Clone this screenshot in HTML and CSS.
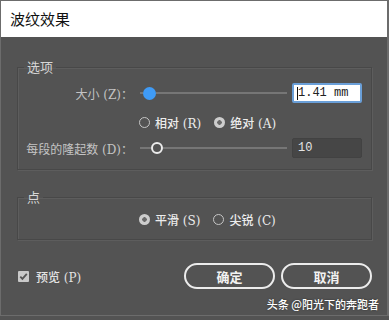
FILE: index.html
```html
<!DOCTYPE html>
<html lang="zh-CN">
<head>
    <meta charset="UTF-8">
    <title>波纹效果</title>
    <link rel="stylesheet" href="styles.css">
</head>
<body>
    <div class="dialog">
        <div class="titlebar">波纹效果</div>
        <div class="content">
            <fieldset class="group group-options">
                <legend>选项</legend>
                <div class="row row-size">
                    <span class="label">大小 (Z)：</span>
                    <div class="slider">
                        <span class="track lead-short"></span>
                        <span class="thumb thumb-blue"></span>
                        <span class="track rest"></span>
                    </div>
                    <div class="field field-active"><span class="caret"></span>1.41 mm</div>
                </div>
                <div class="row row-radios">
                    <span class="radio"><span class="dot"></span>相对 (R)</span>
                    <span class="radio checked"><span class="dot"></span>绝对 (A)</span>
                </div>
                <div class="row row-count">
                    <span class="label">每段的隆起数 (D)：</span>
                    <div class="slider">
                        <span class="track lead-long"></span>
                        <span class="thumb thumb-ring"></span>
                        <span class="track rest"></span>
                    </div>
                    <div class="field">10</div>
                </div>
            </fieldset>

            <fieldset class="group group-points">
                <legend>点</legend>
                <div class="row row-radios">
                    <span class="radio checked"><span class="dot"></span>平滑 (S)</span>
                    <span class="radio"><span class="dot"></span>尖锐 (C)</span>
                </div>
            </fieldset>

            <div class="footer">
                <label class="preview">
                    <span class="checkbox">
                        <svg width="11" height="11" viewBox="0 0 11 11"><path d="M2.3 5.6 L4.4 7.8 L8.8 2.8" fill="none" stroke="#555" stroke-width="1.8"/></svg>
                    </span>
                    预览 (P)
                </label>
                <div class="buttons">
                    <button class="btn">确定</button>
                    <button class="btn">取消</button>
                </div>
            </div>
        </div>
        <div class="watermark">头条 @阳光下的奔跑者</div>
    </div>
</body>
</html>
```

FILE: styles.css
```css
body {
    margin: 0;
    background-color: #535353;
    font-family: "DejaVu Serif", "Noto Sans CJK SC", serif;
}
.dialog {
    position: relative;
    width: 389px;
    height: 316px;
    box-sizing: border-box;
    background-color: #535353;
    border: 1px solid #6c6c6c;
    border-right-width: 2px;
}
.titlebar {
    height: 36px;
    line-height: 36px;
    padding-left: 9px;
    background-color: #fff;
    color: #111;
    font-family: "Noto Sans CJK SC", sans-serif;
    font-size: 15px;
}
.content {
    padding: 22px 15px 0 16px;
}
.group {
    margin: 0;
    padding: 0 0 11px 0;
    border: 1px solid #484848;
    box-shadow: 1px 1px 0 #5d5d5d, inset 1px 1px 0 #5d5d5d;
}
.group legend {
    margin-left: 6px;
    padding: 0 3px;
    height: 16px;
    line-height: 16px;
    font-family: "Noto Sans CJK SC", sans-serif;
    font-size: 13px;
    color: #d6d6d6;
}
.group-points {
    margin-top: 19px;
    padding-bottom: 12px;
}
.row {
    display: flex;
    align-items: center;
    height: 20px;
    font-size: 12px;
}
.row-size {
    margin-top: 8px;
}
.row-count {
    margin-top: 8px;
}
.row-radios {
    height: 16px;
    margin-top: 11px;
    padding-left: 121px;
    gap: 13px;
}
.group-points .row-radios {
    margin-top: 6px;
}
.label {
    width: 115px;
    text-align: right;
    color: #c4c4c4;
    white-space: nowrap;
}
.slider {
    display: flex;
    align-items: center;
    width: 147px;
    margin-left: 7px;
}
.track {
    height: 2px;
    background-color: #767676;
}
.lead-short {
    width: 3px;
}
.lead-long {
    width: 11px;
}
.rest {
    flex: 1;
}
.thumb {
    width: 13px;
    height: 13px;
    border-radius: 50%;
    box-sizing: border-box;
    flex-shrink: 0;
}
.thumb-blue {
    background-color: #3f9bf6;
}
.thumb-ring {
    width: 12px;
    height: 12px;
    border: 2px solid #ececec;
    background-color: #535353;
}
.field {
    display: flex;
    align-items: center;
    width: 70px;
    height: 20px;
    margin-left: 5px;
    box-sizing: border-box;
    padding-left: 5px;
    background-color: #464646;
    border: 1px solid #424242;
    border-radius: 2px;
    color: #e4e4e4;
    font-family: "Liberation Mono", monospace;
    font-size: 12px;
}
.field-active {
    background-color: #fff;
    border: 2px solid #6a9fd8;
    padding-left: 3px;
    color: #222;
}
.caret {
    width: 1px;
    height: 13px;
    background-color: #111;
}
.radio {
    display: flex;
    align-items: center;
    gap: 5px;
    color: #ececec;
    font-size: 12px;
    font-weight: 500;
}
.dot {
    width: 11px;
    height: 11px;
    box-sizing: border-box;
    border-radius: 50%;
    border: 1.5px solid #c6c6c6;
}
.radio.checked .dot {
    border: none;
    background: radial-gradient(circle, #6a6a6a 0 2px, #cdcdcd 2.5px);
}
.footer {
    display: flex;
    align-items: center;
    justify-content: space-between;
    margin-top: 23px;
    height: 26px;
}
.preview {
    display: flex;
    align-items: center;
    gap: 7px;
    padding-left: 1px;
    color: #e2e2e2;
    font-size: 12px;
    font-weight: 500;
}
.checkbox {
    display: flex;
    width: 11px;
    height: 11px;
    background-color: #c9c9c9;
    border-radius: 1px;
}
.buttons {
    display: flex;
    gap: 6px;
}
.btn {
    width: 91px;
    height: 26px;
    box-sizing: border-box;
    background-color: #535353;
    border: 2px solid #ececec;
    border-radius: 13px;
    color: #f2f2f2;
    font-family: "Noto Sans CJK SC", sans-serif;
    font-size: 13px;
    font-weight: bold;
    padding: 0;
}
.watermark {
    position: absolute;
    right: 8px;
    bottom: 3px;
    color: #fff;
    font-family: "Noto Sans CJK SC", sans-serif;
    font-size: 11px;
    font-weight: 500;
    text-shadow: 0 0 2px rgba(0, 0, 0, 0.5);
}
```
